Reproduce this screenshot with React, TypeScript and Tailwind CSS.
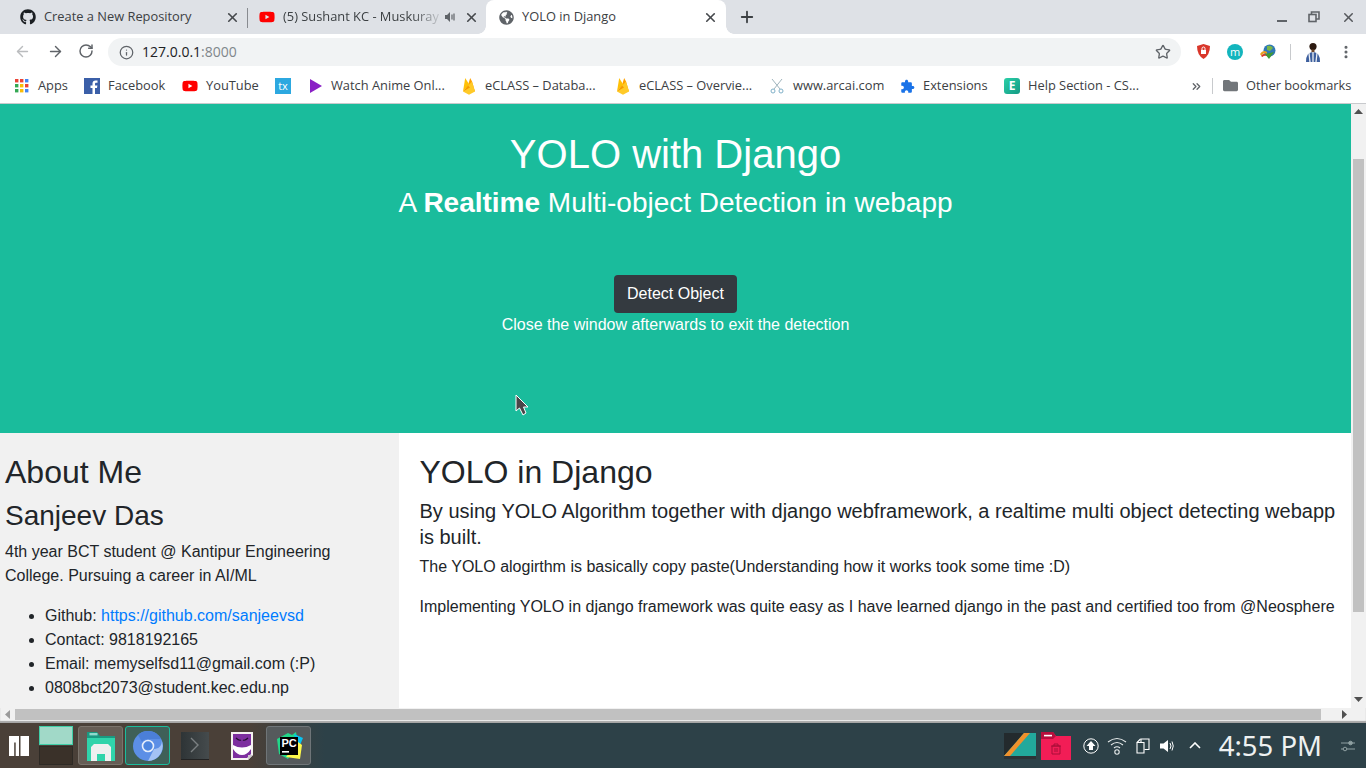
import React from "react";
import { X, Plus, ArrowLeft, ArrowRight, RotateCw, Info, Star, EllipsisVertical, ChevronsRight } from "lucide-react";
import { FaGithub, FaYoutube, FaFolder, FaGlobeAmericas } from "react-icons/fa";

const Flame = () => (
  <svg width="14" height="18" viewBox="0 0 14 18">
    <path d="M6 8 L8.2 1 L10 4.5 L13 14.5 L6 12Z" fill="#ffa000" />
    <path d="M1 14.5 L3.2 1 L7.2 7.5 Z" fill="#ffc107" />
    <path d="M1 14.5 L7.2 7.5 L10 4.5 L13 14.5 L7 17.8Z" fill="#ffca28" />
    <path d="M6 8.5 L8 10.5 L1 14.5Z" fill="#f59a00" />
  </svg>
);

const Bookmark = ({ icon, label, w }: { icon: React.ReactNode; label: string; w: string }) => (
  <div className={`flex items-center h-full shrink-0 ${w}`}>
    <span className="w-[16px] h-[16px] flex items-center justify-center shrink-0">{icon}</span>
    <span className="ml-[8px] text-[12.85px] text-[#3c4043] whitespace-nowrap">{label}</span>
  </div>
);

const Tab = ({ icon, label, active, w, pl, pr, speaker }: { icon: React.ReactNode; label: string; active?: boolean; w: string; pl: string; pr: string; speaker?: boolean }) => (
  <div className={`flex items-center h-full shrink-0 relative ${w} ${pl} ${pr} ${active ? "bg-white rounded-t-[8px]" : ""}`}>
    {active && (
      <>
        <div className="absolute -left-[8px] bottom-0 w-[8px] h-[8px] bg-[radial-gradient(circle_at_0_0,transparent_7.5px,#ffffff_8px)]" />
        <div className="absolute -right-[8px] bottom-0 w-[8px] h-[8px] bg-[radial-gradient(circle_at_100%_0,transparent_7.5px,#ffffff_8px)]" />
      </>
    )}
    <span className="w-[16px] h-[16px] flex items-center justify-center shrink-0">{icon}</span>
    <span className={`ml-[8px] text-[12.85px] text-[#3c4043] whitespace-nowrap flex-1 ${speaker ? "[mask-image:linear-gradient(to_right,#000_80%,transparent_100%)]" : ""}`}>{label}</span>
    {speaker && (
      <svg width="12" height="12" viewBox="0 0 12 12" className="mr-[8px] shrink-0">
        <path d="M1 4h2l3-3v10L3 8H1z" fill="#5f6368" />
        <path d="M8 3.5v5M10 2.5v7" stroke="#5f6368" strokeWidth="1.2" />
      </svg>
    )}
    <X size={15} strokeWidth={2.6} className="text-[#45484c] shrink-0" />
  </div>
);

export default function App() {
  return (
    <div className="w-[1366px] h-[768px] flex flex-col overflow-hidden bg-white font-['Liberation_Sans',sans-serif] text-[#212529]">
      {/* Tab strip */}
      <div className="h-[34px] bg-[#dee1e6] flex items-end shrink-0 font-['Open_Sans','Noto_Sans',sans-serif]">
        <div className="flex h-[34px] w-[1260px]">
          <Tab w="w-[247px]" pl="pl-[20px]" pr="pr-[7px]" label="Create a New Repository" icon={<FaGithub size={16} className="text-[#1b1f23]" />} />
          <div className="w-[1px] h-[20px] bg-[#888b90] mt-[8px] shrink-0" />
          <Tab w="w-[238px]" pl="pl-[11px]" pr="pr-[7px]" speaker label="(5) Sushant KC - Muskuray" icon={<FaYoutube size={16} className="text-[#ff0000]" />} />
          <Tab w="w-[240px]" pl="pl-[12px]" pr="pr-[8px]" active label="YOLO in Django" icon={<FaGlobeAmericas size={15} className="text-[#5f6368]" />} />
          <div className="flex items-center ml-[12px]">
            <Plus size={18} strokeWidth={2.4} className="text-[#3c4043]" />
          </div>
        </div>
        <div className="flex-1 h-full flex items-center justify-end pr-[10px] gap-[21px] text-[#55585c]">
          <div className="w-[10px] h-[2px] bg-[#5f6368] mt-[7px]" />
          <svg width="12" height="12" viewBox="0 0 12 12" fill="none" stroke="#5f6368" strokeWidth="1.6">
            <rect x="1" y="3.5" width="7" height="7" />
            <path d="M3.5 3.5V1h7.5v7H8" />
          </svg>
          <X size={15} strokeWidth={2.4} />
        </div>
      </div>

      {/* Toolbar */}
      <div className="h-[36px] flex items-center shrink-0 bg-white font-['Open_Sans','Noto_Sans',sans-serif]">
        <div className="flex items-center pl-[14px] gap-[16px] w-[108px] mb-[2px]">
          <ArrowLeft size={17} strokeWidth={2} className="text-[#babcbe]" />
          <ArrowRight size={17} strokeWidth={2} className="text-[#5f6368]" />
          <RotateCw size={16} strokeWidth={2.2} className="text-[#5f6368] -ml-[2px]" />
        </div>
        <div className="w-[1073px] h-[28px] bg-[#f1f3f4] rounded-full flex items-center pl-[11px] pr-[10px]">
          <Info size={15} strokeWidth={2} className="text-[#5f6368] shrink-0" />
          <span className="ml-[8px] mb-[2px] text-[14px] text-[#202124]">127.0.0.1<span className="text-[#80868b]">:8000</span></span>
          <Star size={16} strokeWidth={2} className="ml-auto text-[#5f6368]" />
        </div>
        <div className="flex items-center flex-1 pl-[15px] mb-[1px]">
          <svg width="15" height="17" viewBox="0 0 15 17">
            <path d="M7.5 1 L14 3 Q14 12 7.5 16 Q1 12 1 3Z" fill="#d9362a" />
            <rect x="5" y="7" width="5" height="4" fill="#fff" />
            <path d="M6 7V5.5a1.5 1.5 0 013 0V7" stroke="#fff" fill="none" />
          </svg>
          <span className="ml-[16px] w-[16px] h-[16px] rounded-full bg-[#13b5bd] text-white text-[11px] leading-[15px] text-center">m</span>
          <svg width="17" height="16" viewBox="0 0 17 16" className="ml-[16px]">
            <circle cx="10.5" cy="6.5" r="6" fill="#2f78b5" />
            <path d="M8 2 Q12 1 14 4 L11 7 L8 6Z" fill="#7ab648" />
            <path d="M1 10 Q4 5 8 8 L8 10 Q4 8 2.5 12Z" fill="#e8a020" />
            <path d="M2 12 Q4 9 8 10 L8 12 Q5 11 3.5 13Z" fill="#d33a2c" />
            <path d="M6 10 L15 8 L10 15Z" fill="#3f9a33" />
          </svg>
          <div className="ml-[14px] w-[1px] h-[16px] bg-[#c8cacd]" />
          <svg width="16" height="20" viewBox="0 0 16 20" className="ml-[14px]">
            <circle cx="8" cy="4.6" r="3.6" fill="#2c1a10" />
            <rect x="6.5" y="7.5" width="3" height="3" fill="#6b4428" />
            <path d="M1 20 Q1 10 8 10 Q15 10 15 20Z" fill="#3d5f9e" />
            <path d="M4 11 L5 20 M8 10 L8 20 M12 11 L11 20" stroke="#eef1f5" strokeWidth="1.3" />
          </svg>
          <EllipsisVertical size={16} strokeWidth={2.6} className="ml-[17px] text-[#5f6368]" />
        </div>
      </div>

      {/* Bookmarks bar */}
      <div className="h-[34px] pb-[1px] flex items-center shrink-0 bg-white border-b border-[#c8cacd] font-['Open_Sans','Noto_Sans',sans-serif] pl-[14px]">
        <Bookmark w="w-[70px]" label="Apps" icon={
          <svg width="14" height="14" viewBox="0 0 14 14">
            {[
              [0, 0, "#ea4335"], [5, 0, "#ea4335"], [10, 0, "#4285f4"],
              [0, 5, "#34a853"], [5, 5, "#fbbc05"], [10, 5, "#ea4335"],
              [0, 10, "#34a853"], [5, 10, "#fbbc05"], [10, 10, "#4285f4"],
            ].map(([x, y, c], i) => (
              <rect key={i} x={x as number} y={y as number} width="3.4" height="3.4" fill={c as string} />
            ))}
          </svg>
        } />
        <Bookmark w="w-[98px]" label="Facebook" icon={
          <svg width="16" height="16" viewBox="0 0 16 16">
            <rect width="16" height="16" fill="#3b5fa8" />
            <path d="M11 16V10H13L13.4 7.5H11V6C11 5.2 11.4 4.8 12.2 4.8H13.5V2.6H11.6C9.6 2.6 8.5 3.8 8.5 5.8V7.5H6.5V10H8.5V16Z" fill="#fff" />
          </svg>
        } />
        <Bookmark w="w-[93px]" label="YouTube" icon={<FaYoutube size={16} className="text-[#ff0000]" />} />
        <div className="w-[32px] flex items-center h-full shrink-0">
          <span className="w-[16px] h-[16px] bg-[#2ca8e0] text-white text-[11px] leading-[15px] text-center">tx</span>
        </div>
        <Bookmark w="w-[154px]" label="Watch Anime Onl..." icon={
          <svg width="13" height="14" viewBox="0 0 13 14"><path d="M1 0 L13 7 L1 14Z" fill="#8a20c5" /></svg>
        } />
        <Bookmark w="w-[154px]" label="eCLASS – Databa..." icon={<Flame />} />
        <Bookmark w="w-[154px]" label="eCLASS – Overvie..." icon={<Flame />} />
        <Bookmark w="w-[130px]" label="www.arcai.com" icon={
          <svg width="14" height="16" viewBox="0 0 14 16" fill="none" stroke="#9fb4bd" strokeWidth="1">
            <path d="M2 1 L10 11 M12 1 L4 11" />
            <circle cx="3" cy="13" r="2" stroke="#7fb0c8" />
            <circle cx="11" cy="13" r="2" stroke="#7fb0c8" />
          </svg>
        } />
        <Bookmark w="w-[105px]" label="Extensions" icon={
          <svg width="15" height="15" viewBox="0 0 24 24">
            <path d="M20.5 11H19V7c0-1.1-.9-2-2-2h-4V3.5C13 2.12 11.88 1 10.5 1S8 2.12 8 3.5V5H4c-1.1 0-1.99.9-1.99 2v3.8H3.5c1.49 0 2.7 1.21 2.7 2.7s-1.21 2.7-2.7 2.7H2V20c0 1.1.9 2 2 2h3.8v-1.5c0-1.49 1.21-2.7 2.7-2.7 1.49 0 2.7 1.21 2.7 2.7V22H17c1.1 0 2-.9 2-2v-4h1.5c1.38 0 2.5-1.12 2.5-2.5S21.88 11 20.5 11z" fill="#1a73e8" />
          </svg>
        } />
        <Bookmark w="w-[188px]" label="Help Section - CS..." icon={
          <span className="w-[16px] h-[16px] rounded-[3px] bg-[linear-gradient(135deg,#2ad0a8,#149a84)] text-white text-[12px] font-bold leading-[16px] text-center">E</span>
        } />
        <ChevronsRight size={13} strokeWidth={2.4} className="text-[#5f6368] shrink-0 ml-[-2px]" />
        <div className="w-[1px] h-[16px] bg-[#c8cacd] ml-[9px] shrink-0" />
        <div className="ml-[10px] flex items-center">
          <FaFolder size={15} className="text-[#72767a]" />
          <span className="ml-[8px] text-[12.85px] text-[#3c4043] whitespace-nowrap">Other bookmarks</span>
        </div>
      </div>

      {/* Page + scrollbars */}
      <div className="h-[619px] shrink-0 flex flex-col bg-white">
        <div className="h-[604px] shrink-0 flex">
          <div className="w-[1351px] h-[604px] overflow-hidden shrink-0 flex flex-col">
            <div className="h-[329px] shrink-0 bg-[#1abc9c] text-white text-center pt-[26px] relative">
              <h1 className="text-[40px] leading-[48px] m-0">YOLO with Django</h1>
              <h2 className="text-[28px] leading-[34px] mt-[8px] mb-0">A <b>Realtime</b> Multi-object Detection in webapp</h2>
              <button className="mt-[55px] mx-auto flex items-center justify-center w-[123px] h-[38px] bg-[#343a40] text-white text-[16px] rounded-[4px]">Detect Object</button>
              <p className="text-[16px] leading-[24px] m-0">Close the window afterwards to exit the detection</p>
              <svg width="14" height="22" viewBox="0 0 14 22" className="absolute left-[515px] top-[290px]">
                <path d="M1 1 V17 L4.5 14 L8 21 L11 19 L8.5 13 L13 13Z" fill="#4a4548" stroke="#fff" strokeWidth="1" />
              </svg>
            </div>
            <div className="flex flex-1">
              <div className="w-[399px] h-[275px] bg-[#f1f1f1] pl-[5px] pr-[20px] pt-[15px] shrink-0">
                <h2 className="text-[32px] leading-[48px] m-0">About Me</h2>
                <h3 className="text-[28px] leading-[34px] mt-[3px] mb-0">Sanjeev Das</h3>
                <p className="text-[16px] leading-[24px] mt-[7px] mb-0">4th year BCT student @ Kantipur Engineering College. Pursuing a career in AI/ML</p>
                <ul className="list-disc pl-[40px] mt-[16px] text-[16px] leading-[24px]">
                  <li>Github: <a className="text-[#007bff]">https://github.com/sanjeevsd</a></li>
                  <li>Contact: 9818192165</li>
                  <li>Email: memyselfsd11@gmail.com (:P)</li>
                  <li>0808bct2073@student.kec.edu.np</li>
                </ul>
              </div>
              <div className="flex-1 pl-[20.5px] pr-[15px] pt-[15px]">
                <h2 className="text-[32px] leading-[48px] m-0">YOLO in Django</h2>
                <h5 className="text-[20px] leading-[26px] mt-[2px] mb-0">By using YOLO Algorithm together with django webframework, a realtime multi object detecting webapp is built.</h5>
                <p className="text-[16px] leading-[24px] mt-[5px] mb-0">The YOLO alogirthm is basically copy paste(Understanding how it works took some time :D)</p>
                <p className="text-[16px] leading-[24px] mt-[16px] mb-0 whitespace-nowrap">Implementing YOLO in django framework was quite easy as I have learned django in the past and certified too from @Neosphere</p>
              </div>
            </div>
          </div>
          {/* vertical scrollbar */}
          <div className="w-[15px] h-[604px] bg-[#f1f1f1] flex flex-col items-center shrink-0">
            <svg width="9" height="5" viewBox="0 0 9 5" className="mt-[5px] shrink-0"><path d="M0 5 L4.5 0 L9 5Z" fill="#505050" /></svg>
            <div className="w-[11px] h-[453px] bg-[#c1c1c1] mt-[45px] shrink-0" />
            <svg width="9" height="5" viewBox="0 0 9 5" className="mt-[85px] shrink-0"><path d="M0 0 L4.5 5 L9 0Z" fill="#505050" /></svg>
          </div>
        </div>
        {/* horizontal scrollbar */}
        <div className="h-[15px] shrink-0 bg-[#f1f1f1] flex items-center pb-[2px] shadow-[inset_0_-2px_1px_#a6a6a6]">
          <svg width="5" height="9" viewBox="0 0 5 9" className="ml-[5px] shrink-0"><path d="M5 0 L0 4.5 L5 9Z" fill="#9a9a9a" /></svg>
          <div className="h-[11px] w-[1306px] ml-[5px] bg-[#c1c1c1] shrink-0" />
          <svg width="5" height="9" viewBox="0 0 5 9" className="ml-[21px] shrink-0"><path d="M0 0 L5 4.5 L0 9Z" fill="#505050" /></svg>
        </div>
      </div>

      {/* Taskbar */}
      <div className="h-[45px] shrink-0 flex items-center bg-[linear-gradient(to_right,#4a4038_0px,#4a4038_250px,#2d4148_325px,#2d4148_100%)] text-white font-['Noto_Sans',sans-serif]">
        <svg width="20" height="20" viewBox="0 0 20 20" className="ml-[9px] shrink-0">
          <path d="M0 0H10V20H6.7V6.5H5.2V20H0Z M11.5 0H20V20H11.5Z" fill="#fff" />
        </svg>
        <div className="ml-[10px] w-[34px] h-[39px] flex flex-col shrink-0">
          <div className="h-[19px] bg-[#a1d9c8] border border-[#3fcfa8]" />
          <div className="h-[19px] mt-[1px] bg-[#3a3129] border border-[#2e2a25]" />
        </div>
        <div className="ml-[5px] w-[45px] h-[39px] rounded-[3px] border border-[#7a736b] bg-[#665d55] flex items-center justify-center shrink-0">
          <svg width="30" height="32" viewBox="0 0 30 32">
            <path d="M1 2H11L14 6H29V31H1Z" fill="#1a9a82" />
            <path d="M1 8H29V31H1Z" fill="#30d4ab" />
            <rect x="3.5" y="3" width="8" height="2.4" fill="#8fd9cc" />
            <path d="M5 31V17L8 14H22L25 17V31H19V24H11V31Z" fill="#eef0f0" />
          </svg>
        </div>
        <div className="ml-[2px] w-[45px] h-[39px] rounded-[3px] border border-[#1abc9c] bg-[#3f6058] flex items-center justify-center shrink-0">
          <svg width="30" height="30" viewBox="0 0 30 30">
            <circle cx="15" cy="15" r="15" fill="#5c8fe6" />
            <path d="M15 0A15 15 0 0 1 28 8H15A7 7 0 0 0 9 11L5 4A15 15 0 0 1 15 0Z" fill="#4b7fd8" />
            <path d="M21 18A7 7 0 0 0 28 8A15 15 0 0 1 15 30Z" fill="#a4c2f4" />
            <circle cx="15" cy="15" r="5.5" fill="#4d86e0" stroke="#e6eefb" strokeWidth="1.6" />
          </svg>
        </div>
        <div className="ml-[11px] w-[28px] h-[28px] bg-[linear-gradient(to_right,#2e3436,#454b4d)] border-b border-[#222] flex items-center justify-center shrink-0">
          <svg width="10" height="16" viewBox="0 0 10 16" fill="none" stroke="#7b8082" strokeWidth="1.4"><path d="M1 1L8 8L1 15" /></svg>
        </div>
        <svg width="22" height="28" viewBox="0 0 22 28" className="ml-[22px] shrink-0">
          <path d="M0 0H22V23L17 28H0Z" fill="#f5f2f0" />
          <path d="M2 2H20V22L16 26H2Z" fill="#7d2f9f" />
          <path d="M5 6Q8 9 10 8M17 6Q14 9 12 8" stroke="#23102f" strokeWidth="1.2" fill="none" />
          <path d="M2 13Q11 18 20 13V17Q16 23 11 23Q6 23 2 17Z" fill="#fff" />
          <path d="M17 28L17 23H22Z" fill="#cfc9cf" />
        </svg>
        <div className="ml-[13px] w-[45px] h-[39px] rounded-[3px] border border-[#6f7578] bg-[#555a5c] flex items-center justify-center shrink-0">
          <svg width="30" height="30" viewBox="0 0 30 30">
            <path d="M3 8L14 2L18 4L22 1L24 12L14 28L5 23Z" fill="#21d789" />
            <path d="M20 3L29 7L26 14L22 11Z" fill="#07c3f2" />
            <path d="M24 11L28 14L26 28L12 26Z" fill="#fcf84a" />
            <rect x="6" y="6" width="18" height="18" fill="#000" />
            <text x="7.5" y="16" fontSize="11" fontWeight="700" fill="#fff" fontFamily="Liberation Sans, sans-serif">PC</text>
            <rect x="8" y="20" width="7" height="1.6" fill="#fff" />
          </svg>
        </div>

        <div className="ml-auto flex items-center shrink-0">
          <svg width="32" height="26" viewBox="0 0 32 26">
            <rect width="32" height="23" fill="#22a99c" />
            <path d="M0 0H20L0 23Z" fill="#232a2d" />
            <path d="M20 0H26L6 23H0Z" fill="#f0912c" />
            <rect y="23" width="32" height="3" fill="#2b3337" />
          </svg>
          <svg width="30" height="28" viewBox="0 0 30 28" className="ml-[5px]">
            <path d="M0 0H12L15 4H30V28H0Z" fill="#f21d56" />
            <path d="M0 0H12L15 4L12 7H0Z" fill="#b70f3d" />
            <rect x="3" y="2.8" width="8" height="1.6" fill="#fff" />
            <path d="M11 14H19V22H11Z M10 14H20 M13 14V12H17V14 M14 16V20 M16 16V20" fill="none" stroke="#a80e38" strokeWidth="1" />
          </svg>
          <svg width="16" height="16" viewBox="0 0 16 16" className="ml-[12px]">
            <circle cx="8" cy="8" r="7.2" fill="none" stroke="#fff" strokeWidth="1" />
            <path d="M8 3L12.5 8H10V12H6V8H3.5Z" fill="#fff" />
          </svg>
          <svg width="20" height="18" viewBox="0 0 20 18" fill="none" stroke="#e8ecec" strokeWidth="1.1" className="ml-[8px]">
            <path d="M1 5Q10 -2 19 5M4 8Q10 3 16 8M7 11Q10 8.5 13 11" />
            <circle cx="10" cy="15" r="2.2" />
          </svg>
          <svg width="14" height="16" viewBox="0 0 14 16" fill="none" stroke="#fff" strokeWidth="1.1" className="ml-[9px]">
            <path d="M1 4.5H8V15H1Z" fill="#2d4148" />
            <path d="M5 4V1H13V11.5H8.5" />
            <path d="M1 4.5L4.5 1" />
          </svg>
          <svg width="14" height="14" viewBox="0 0 14 14" className="ml-[10px]">
            <path d="M0 4.5H3.5L8 1V13L3.5 9.5H0Z" fill="#fff" />
            <path d="M10 4Q12 7 10 10M12 2.5Q14.5 7 12 11.5" stroke="#fff" fill="none" strokeWidth="1" />
          </svg>
          <svg width="12" height="7" viewBox="0 0 12 7" className="ml-[15px]" fill="none" stroke="#fff" strokeWidth="1.6"><path d="M1 6L6 1L11 6" /></svg>
          <span className="ml-[18px] text-[27.5px] leading-[29px] text-[#eef1f1] whitespace-nowrap">4:55 PM</span>
          <svg width="14" height="14" viewBox="0 0 14 14" className="ml-[19px] mr-[11px]" fill="none" stroke="#8fa0a2" strokeWidth="1">
            <path d="M0 4H14M0 10H14" />
            <circle cx="9.5" cy="4" r="1.8" fill="#8fa0a2" />
            <circle cx="4" cy="10" r="1.8" fill="#2d4148" />
          </svg>
        </div>
      </div>
    </div>
  );
}
